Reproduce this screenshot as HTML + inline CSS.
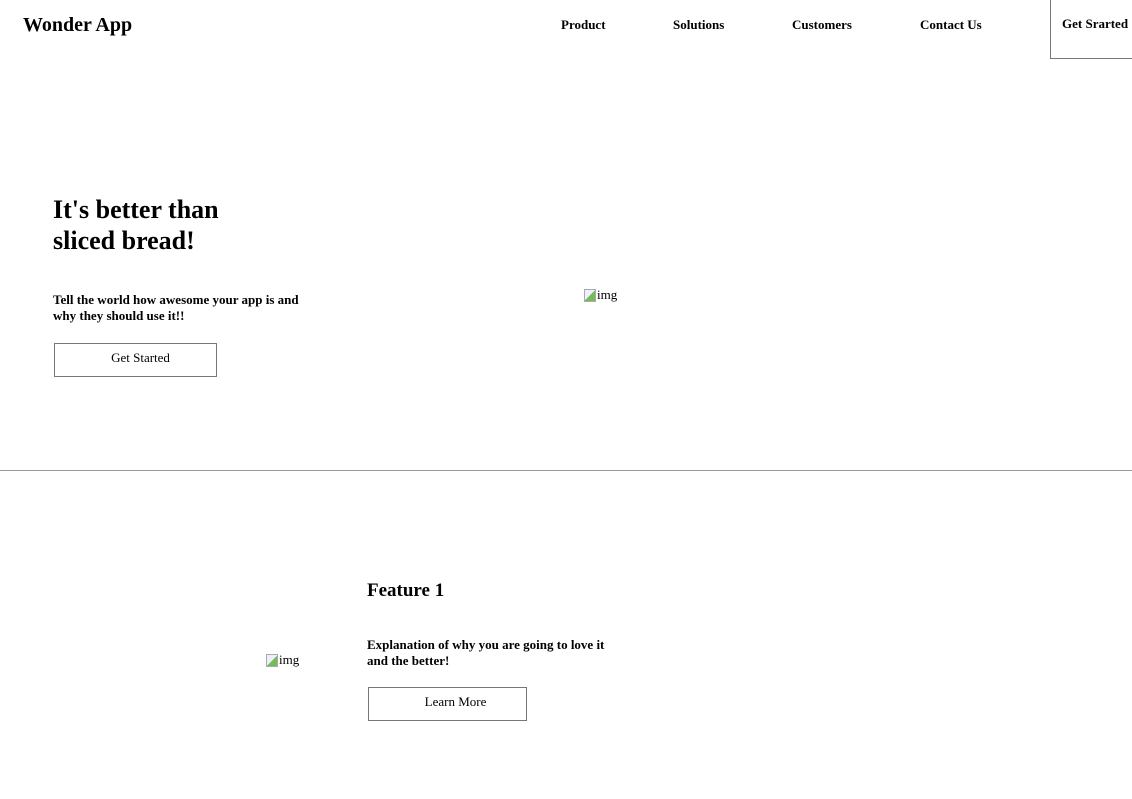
<!DOCTYPE html>
<html><head><meta charset="utf-8"><style>
*{margin:0;padding:0;box-sizing:border-box}
body{width:1132px;height:799px;overflow:hidden;background:#fff;font-family:"Liberation Serif",serif;color:#000;position:relative}
.a{position:absolute;white-space:nowrap}
.nav{font-weight:bold;font-size:13px}
.btn{position:absolute;border:1px solid #777;font-size:13px;text-align:center}
.img{position:absolute;font-size:13px;display:flex;align-items:center}
.img i{display:inline-block;width:12px;height:13px;border:1px solid #aaa;background:linear-gradient(135deg,#eef 50%,#7b5 50%);margin-right:1px}
</style></head><body>
<div class="a" style="left:23px;top:14px;font-size:20px;font-weight:bold">Wonder App</div>
<div class="a nav" style="left:561px;top:17px">Product</div>
<div class="a nav" style="left:673px;top:17px">Solutions</div>
<div class="a nav" style="left:792px;top:17px">Customers</div>
<div class="a nav" style="left:920px;top:17px">Contact Us</div>
<div class="a" style="left:1050px;top:-2px;width:90px;height:61px;border:1px solid #777"></div>
<div class="a nav" style="left:1062px;top:16px">Get Srarted</div>
<div class="a" style="left:53px;top:194px;font-size:26px;font-weight:bold;line-height:31px">It's better than<br>sliced bread!</div>
<div class="a" style="left:53px;top:292px;font-size:13px;font-weight:bold;line-height:16px">Tell the world how awesome your app is and<br>why they should use it!!</div>
<div class="btn" style="left:54px;top:343px;width:163px;height:34px;line-height:28px;padding-left:10px">Get Started</div>
<div class="img" style="left:584px;top:287px"><i></i>img</div>
<div class="a" style="left:0;top:470px;width:1132px;height:1px;background:#999"></div>
<div class="a" style="left:367px;top:580px;font-size:19px;font-weight:bold">Feature 1</div>
<div class="a" style="left:367px;top:637px;font-size:13px;font-weight:bold;line-height:16px">Explanation of why you are going to love it<br>and the better!</div>
<div class="btn" style="left:368px;top:687px;width:159px;height:34px;line-height:28px;padding-left:16px">Learn More</div>
<div class="img" style="left:266px;top:652px"><i></i>img</div>
</body></html>
